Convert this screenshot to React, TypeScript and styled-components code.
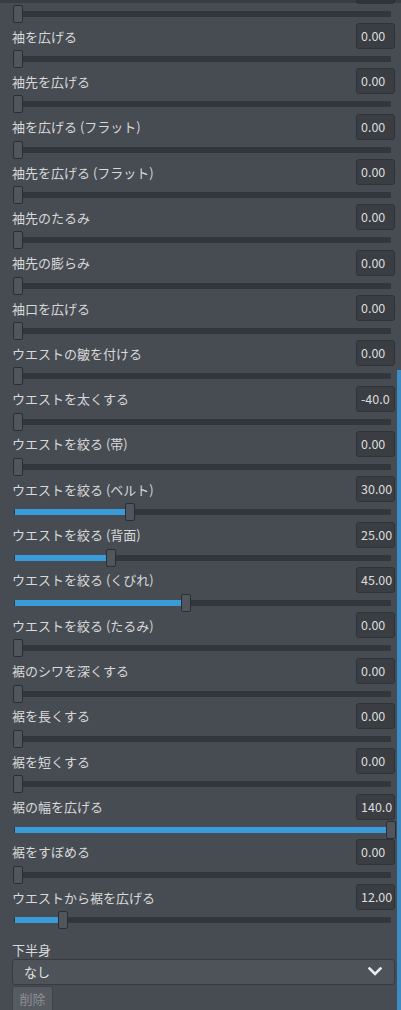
import React from 'react'
import styled, { createGlobalStyle } from 'styled-components';

const GlobalStyle = createGlobalStyle`
  html, body {
    margin: 0;
    padding: 0;
    background: #474c52;
    overflow: hidden;
  }
  body {
    font-family: "Noto Sans CJK JP", "Noto Sans", sans-serif;
    color: #d6d7d8;
  }
`;

interface SliderRowProps {
  label: string;
  value: number;
  display: string;
}

const Frame = styled.div`
  position: relative;
  width: 401px;
  height: 1010px;
  overflow: hidden;
`;

const TopShade = styled.div`
  position: absolute;
  top: 0;
  left: 0;
  right: 0;
  height: 3px;
  background: rgba(30, 33, 36, 0.35);
`;

const ScrollThumb = styled.div`
  position: absolute;
  top: 370px;
  right: 0;
  bottom: 0;
  width: 4px;
  background: #3b8cc4;
`;

const Panel = styled.div`
  margin-top: -22.3px;
  padding: 0 6px 0 12px;
`;

const Row = styled.div`
  height: 45.33px;
  display: grid;
  grid-template-rows: 26px 1fr;
`;

const Header = styled.div`
  display: flex;
  align-items: center;
  justify-content: space-between;
`;

const Label = styled.span`
  font-size: 13px;
  color: #d8d9da;
  white-space: nowrap;
`;

const ValueBox = styled.div`
  box-sizing: border-box;
  width: 39px;
  height: 26px;
  padding-left: 4px;
  background: #3a3e43;
  border: 1px solid #2f3236;
  border-radius: 3px;
  font-size: 12.5px;
  line-height: 24px;
  color: #dcdcdc;
  white-space: nowrap;
  overflow: hidden;
`;

const Slider = styled.div`
  position: relative;
  height: 18px;
  margin: 1px 4px 0 1px;
`;

const Track = styled.div`
  margin: 6px 0 0 1px;
  height: 6px;
  background: #33373b;
  border-radius: 1px;
  overflow: hidden;
`;

const Fill = styled.div`
  height: 100%;
  margin-left: 1px;
  background: #3a9bdb;
`;

const Handle = styled.div`
  position: absolute;
  top: 0;
  box-sizing: border-box;
  width: 10px;
  height: 18px;
  background: #51565c;
  border: 1px solid #2a2d31;
  border-radius: 2px;
`;

const Section = styled.div`
  padding: 10px 6px 0 12px;
`;

const SectionLabel = styled.div`
  font-size: 13px;
  line-height: 19px;
  color: #d8d9da;
`;

const Select = styled.div`
  box-sizing: border-box;
  height: 26px;
  display: flex;
  align-items: center;
  justify-content: space-between;
  padding: 0 12px 0 11px;
  background: #4e5359;
  border: 1px solid #373b3f;
  border-radius: 3px;
  font-size: 13px;
  color: #e2e2e2;
`;

const DeleteButton = styled.button`
  margin-top: 1px;
  box-sizing: border-box;
  width: 41px;
  height: 26px;
  padding: 0;
  background: #565b61;
  border: 1px solid #3f4347;
  border-radius: 2px;
  font-family: inherit;
  font-size: 13px;
  color: #8b9096;
`;

// first row is scrolled mostly out of view, only its slider shows
const rows: SliderRowProps[] = [
  { label: '', value: 0, display: '' },
  { label: '袖を広げる', value: 0, display: '0.00' },
  { label: '袖先を広げる', value: 0, display: '0.00' },
  { label: '袖を広げる (フラット)', value: 0, display: '0.00' },
  { label: '袖先を広げる (フラット)', value: 0, display: '0.00' },
  { label: '袖先のたるみ', value: 0, display: '0.00' },
  { label: '袖先の膨らみ', value: 0, display: '0.00' },
  { label: '袖口を広げる', value: 0, display: '0.00' },
  { label: 'ウエストの皺を付ける', value: 0, display: '0.00' },
  { label: 'ウエストを太くする', value: -40, display: '-40.0' },
  { label: 'ウエストを絞る (帯)', value: 0, display: '0.00' },
  { label: 'ウエストを絞る (ベルト)', value: 30, display: '30.00' },
  { label: 'ウエストを絞る (背面)', value: 25, display: '25.00' },
  { label: 'ウエストを絞る (くびれ)', value: 45, display: '45.00' },
  { label: 'ウエストを絞る (たるみ)', value: 0, display: '0.00' },
  { label: '裾のシワを深くする', value: 0, display: '0.00' },
  { label: '裾を長くする', value: 0, display: '0.00' },
  { label: '裾を短くする', value: 0, display: '0.00' },
  { label: '裾の幅を広げる', value: 140, display: '140.0' },
  { label: '裾をすぼめる', value: 0, display: '0.00' },
  { label: 'ウエストから裾を広げる', value: 12, display: '12.00' },
];

const SliderRow: React.FC<SliderRowProps> = (props) => {
  const pct = Math.max(0, Math.min(100, props.value)) / 100;
  return (
    <Row>
      <Header>
        <Label>{props.label}</Label>
        <ValueBox>{props.display}</ValueBox>
      </Header>
      <Slider>
        <Track>
          <Fill style={{ width: `calc(${pct} * (100% - 5px) - 1px)` }} />
        </Track>
        <Handle style={{ left: `calc(${pct} * (100% - 5px))` }} />
      </Slider>
    </Row>
  )
}

const Chevron = () => (
  <svg width="14" height="9" viewBox="0 0 14 9">
    <path d="M1.5 1.5 L7 7 L12.5 1.5" fill="none" stroke="#ececec" strokeWidth="2.6" strokeLinecap="square" />
  </svg>
)

const App: React.FC = () => {
  return (
    <Frame>
      <GlobalStyle />
      <Panel>
        {rows.map((r, i) => (
          <SliderRow key={i} {...r} />
        ))}
      </Panel>
      <Section>
        <SectionLabel>下半身</SectionLabel>
        <Select>
          <span>なし</span>
          <Chevron />
        </Select>
        <DeleteButton>削除</DeleteButton>
      </Section>
      <TopShade />
      <ScrollThumb />
    </Frame>
  )
}

export default App
